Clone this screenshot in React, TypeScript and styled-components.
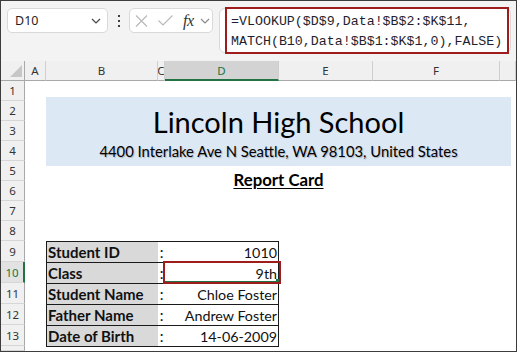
import React from 'react';
import styled, { createGlobalStyle, css } from 'styled-components';

const GREEN = '#217346';
const RED = '#9e1c1c';

const GlobalStyle = createGlobalStyle`
  html, body { margin: 0; padding: 0; background: #ffffff; }
  body { font-family: "Noto Sans", sans-serif; }
`;

const Frame = styled.div`
  width: 517px;
  height: 352px;
  box-sizing: border-box;
  border: 1px solid #3d3d3d;
  overflow: hidden;
  display: flex;
  flex-direction: column;
  background: #fff;
`;

/* ---------- formula bar ---------- */

const Toolbar = styled.div`
  height: 60px;
  flex: none;
  box-sizing: border-box;
  display: flex;
  align-items: flex-start;
  padding: 7px 0 0 6px;
  background: #f3f3f3;
`;

const NameBox = styled.div`
  width: 101px;
  height: 25px;
  box-sizing: border-box;
  display: flex;
  align-items: center;
  justify-content: space-between;
  padding: 0 6px 0 7px;
  background: #fff;
  border: 1px solid #d9d9d9;
  border-radius: 5px;
  font-size: 12.5px;
  color: #1f1f1f;
`;

const Dots = styled.div`
  width: 21px;
  height: 25px;
  display: flex;
  flex-direction: column;
  align-items: center;
  justify-content: center;
  gap: 3px;

  span {
    width: 2px;
    height: 2px;
    background: #404040;
  }
`;

const ButtonGroup = styled.div`
  width: 84px;
  height: 25px;
  box-sizing: border-box;
  display: flex;
  align-items: center;
  padding-left: 5px;
  background: #fff;
  border: 1px solid #d9d9d9;
  border-radius: 5px;
`;

const IconSlot = styled.span<{ $gap: number }>`
  display: flex;
  align-items: center;
  margin-right: ${(p) => p.$gap}px;
`;

const Fx = styled.span`
  font-family: "Liberation Serif", serif;
  font-style: italic;
  font-size: 16px;
  color: #333;
  margin-right: 6px;
  letter-spacing: -0.5px;
`;

const FormulaWrap = styled.div`
  margin-left: 6px;
  width: 292px;
  height: 45px;
  box-sizing: border-box;
  display: flex;
  background: #fff;
  border: 1px solid #d9d9d9;
  border-radius: 6px;
`;

const FormulaBox = styled.div`
  flex: 1;
  height: 47px;
  box-sizing: border-box;
  margin: -2px 1px 0 5px;
  padding: 3px 0 0 4px;
  border: 2px solid ${RED};
  background: #fff;
  font-family: "Liberation Mono", monospace;
  font-size: 13.3px;
  line-height: 20px;
  white-space: pre;
  color: #1f1f2f;
`;

/* ---------- sheet ---------- */

const Sheet = styled.div`
  flex: 1;
  display: grid;
  grid-template-columns: 24px 21px 112px 7px 114px 94px 127px 1fr;
  grid-template-rows: 20px repeat(8, 20px) repeat(5, 21px) 1fr;
  background: #fff;
`;

const headFont = css`
  font-family: "Noto Sans", sans-serif;
  font-size: 11.5px;
  color: #333;
`;

const Corner = styled.div`
  grid-column: 1;
  grid-row: 1;
  box-sizing: border-box;
  display: flex;
  align-items: flex-end;
  justify-content: flex-end;
  padding: 0 2px 3px 0;
  background: #f0f0f0;
  border-right: 1px solid #a8a8a8;
  border-bottom: 1px solid #a8a8a8;
`;

const ColHead = styled.div<{ $col: number; $selected?: boolean }>`
  ${headFont};
  grid-row: 1;
  grid-column: ${(p) => p.$col};
  box-sizing: border-box;
  display: flex;
  align-items: center;
  justify-content: center;
  overflow: hidden;
  background: #f0f0f0;
  border-right: 1px solid #cfcfcf;
  border-bottom: 1px solid #a8a8a8;
  ${(p) =>
    p.$selected &&
    css`
      background: #d3d3d3;
      color: ${GREEN};
      border-bottom: 2px solid ${GREEN};
    `}
`;

const RowHead = styled.div<{ $row: number; $selected?: boolean }>`
  ${headFont};
  grid-column: 1;
  grid-row: ${(p) => p.$row};
  box-sizing: border-box;
  display: flex;
  align-items: center;
  justify-content: center;
  background: #f0f0f0;
  border-right: 1px solid #a8a8a8;
  border-bottom: 1px solid #d6d6d6;
  ${(p) =>
    p.$selected &&
    css`
      background: #e2e2e2;
      color: ${GREEN};
      border-right: 2px solid ${GREEN};
    `}
`;

const Heading = styled.div`
  grid-column: 3 / -1;
  grid-row: 3 / 8;
  display: flex;
  flex-direction: column;
  font-family: Lato, "Liberation Sans", sans-serif;
  color: #000;
`;

const Banner = styled.div`
  height: 69px;
  margin: -4px 5px 0 0;
  box-sizing: border-box;
  padding-top: 7px;
  display: flex;
  flex-direction: column;
  align-items: center;
  background: #dde8f5;
`;

const SchoolName = styled.div`
  font-size: 29px;
  line-height: 36px;
`;

const Address = styled.div`
  margin-top: 2px;
  font-size: 14.8px;
  line-height: 18px;
  text-shadow: 1px 1px 1px rgba(0, 0, 0, 0.22);
`;

const ReportTitle = styled.div`
  align-self: center;
  margin: 4px 5px 0 0;
  font-size: 16.8px;
  line-height: 20px;
  font-weight: 700;
  text-decoration: underline;
  text-underline-offset: 2px;
`;

const TableBox = styled.div`
  grid-column: 3 / 6;
  grid-row: 10 / 15;
  align-self: start;
  border: 1px solid #1a1a1a;
  border-bottom: none;
  font-family: Lato, "Liberation Sans", sans-serif;
  font-size: 14.3px;
  color: #111;
`;

const TableRow = styled.div`
  height: 21px;
  box-sizing: border-box;
  display: grid;
  grid-template-columns: 111px 7px 1fr;
  border-bottom: 1px solid #1a1a1a;
`;

const LabelCell = styled.div`
  display: flex;
  align-items: center;
  padding-left: 1px;
  background: #d9d9d9;
  font-size: 15px;
  font-weight: 700;
  white-space: nowrap;
`;

const ColonCell = styled.div`
  display: flex;
  align-items: center;
  justify-content: center;
  font-size: 15px;
`;

const ValueCell = styled.div<{ $selected?: boolean }>`
  position: relative;
  display: flex;
  align-items: center;
  justify-content: flex-end;
  padding-right: 1px;
  white-space: nowrap;

  ${(p) =>
    p.$selected &&
    css`
      &::before {
        content: '';
        position: absolute;
        left: 0;
        right: 1px;
        bottom: 1px;
        height: 1px;
        background: ${GREEN};
      }
      &::after {
        content: '';
        position: absolute;
        left: -2px;
        right: -3px;
        top: -2px;
        bottom: -1px;
        border: 2px solid ${RED};
      }
    `}
`;

const FillHandle = styled.span`
  position: absolute;
  right: -1px;
  bottom: 1px;
  width: 3px;
  height: 3px;
  background: ${GREEN};
`;

const columns = [
  { id: 'A', col: 2 },
  { id: 'B', col: 3 },
  { id: 'C', col: 4 },
  { id: 'D', col: 5 },
  { id: 'E', col: 6 },
  { id: 'F', col: 7 },
  { id: '', col: 8 },
];

// row 14 is only a sliver at the bottom edge, its number is not visible
const rows = Array.from({ length: 14 }, (_, i) => i + 1);

const records = [
  { label: 'Student ID', value: '1010' },
  { label: 'Class', value: '9th', selected: true },
  { label: 'Student Name', value: 'Chloe Foster' },
  { label: 'Father Name', value: 'Andrew Foster' },
  { label: 'Date of Birth', value: '14-06-2009' },
];

const Chevron = ({ color }: { color: string }) => (
  <svg width="10" height="6" viewBox="0 0 10 6">
    <path d="M1 1 L5 5 L9 1" fill="none" stroke={color} strokeWidth="1.2" />
  </svg>
);

export default function App() {
  return (
    <>
      <GlobalStyle />
      <Frame>
        <Toolbar>
          <NameBox>
            <span>D10</span>
            <Chevron color="#444" />
          </NameBox>
          <Dots>
            <span />
            <span />
            <span />
          </Dots>
          <ButtonGroup>
            <IconSlot $gap={10}>
              <svg width="13" height="12" viewBox="0 0 13 12">
                <path d="M1 0.5 L12 11.5 M12 0.5 L1 11.5" stroke="#b8b8b8" strokeWidth="1.1" />
              </svg>
            </IconSlot>
            <IconSlot $gap={10}>
              <svg width="15" height="11" viewBox="0 0 15 11">
                <path d="M0.5 5.5 L5 10 L14.5 0.5" fill="none" stroke="#b8b8b8" strokeWidth="1.1" />
              </svg>
            </IconSlot>
            <Fx>fx</Fx>
            <Chevron color="#8a8a8a" />
          </ButtonGroup>
          <FormulaWrap>
            <FormulaBox>
              {'=VLOOKUP($D$9,Data!$B$2:$K$11,\nMATCH(B10,Data!$B$1:$K$1,0),FALSE)'}
            </FormulaBox>
          </FormulaWrap>
        </Toolbar>

        <Sheet>
          <Corner>
            <svg width="12" height="12" viewBox="0 0 12 12">
              <path d="M12 0 L12 12 L0 12 Z" fill="#c6c6c6" />
            </svg>
          </Corner>
          {columns.map((c) => (
            <ColHead key={c.col} $col={c.col} $selected={c.id === 'D'}>
              {c.id}
            </ColHead>
          ))}
          {rows.map((r) => (
            <RowHead key={r} $row={r + 1} $selected={r === 10}>
              {r < 14 ? r : ''}
            </RowHead>
          ))}

          <Heading>
            <Banner>
              <SchoolName>Lincoln High School</SchoolName>
              <Address>4400 Interlake Ave N Seattle, WA 98103, United States</Address>
            </Banner>
            <ReportTitle>Report Card</ReportTitle>
          </Heading>

          <TableBox>
            {records.map((r) => (
              <TableRow key={r.label}>
                <LabelCell>{r.label}</LabelCell>
                <ColonCell>:</ColonCell>
                <ValueCell $selected={r.selected}>
                  {r.value}
                  {r.selected && <FillHandle />}
                </ValueCell>
              </TableRow>
            ))}
          </TableBox>
        </Sheet>
      </Frame>
    </>
  );
}
